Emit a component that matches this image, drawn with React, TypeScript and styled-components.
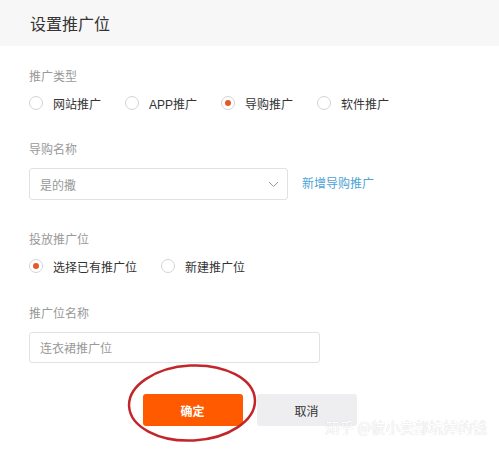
import React from "react";
import styled, { createGlobalStyle } from "styled-components";

const Global = createGlobalStyle`
  html, body { margin: 0; padding: 0; background: #fff; }
  body {
    font-family: "Liberation Sans", "Noto Sans CJK SC", sans-serif;
    width: 499px; height: 449px; overflow: hidden;
  }
`;

const Page = styled.div`
  position: relative;
  width: 499px;
  height: 449px;
  background: #fff;
`;

const Header = styled.div`
  height: 46px;
  background: #f7f7f7;
  display: flex;
  align-items: center;
  padding-left: 30px;
  font-size: 16px;
  color: #333;
  font-family: "Noto Sans CJK SC", sans-serif;
`;

const Body = styled.div`
  display: flex;
  flex-direction: column;
  padding: 0 0 0 29px;
`;

const Label = styled.div<{ $top: number }>`
  margin-top: ${(p) => p.$top}px;
  height: 16px;
  line-height: 16px;
  font-size: 12px;
  color: #999;
  font-family: "Noto Sans CJK SC", sans-serif;
`;

const RadioRow = styled.div`
  margin-top: 9px;
  height: 20px;
  display: flex;
  align-items: center;
`;

const RadioItem = styled.label`
  display: flex;
  align-items: center;
  margin-right: 24px;
  font-size: 12px;
  color: #333;
  font-family: "Liberation Sans", "Noto Sans CJK SC", sans-serif;
`;

const Circle = styled.span<{ $on?: boolean }>`
  width: 12px;
  height: 12px;
  border: 1px solid #d4d4d4;
  border-radius: 50%;
  margin-right: 10px;
  display: flex;
  align-items: center;
  justify-content: center;
  background: #fff;
  &::after {
    content: "";
    display: ${(p) => (p.$on ? "block" : "none")};
    width: 6px;
    height: 6px;
    border-radius: 50%;
    background: #e4582a;
  }
`;

const FieldRow = styled.div`
  margin-top: 11px;
  display: flex;
  align-items: center;
`;

const Select = styled.div`
  box-sizing: border-box;
  width: 259px;
  height: 32px;
  border: 1px solid #e2e2e2;
  border-radius: 3px;
  display: flex;
  align-items: center;
  justify-content: space-between;
  padding: 0 8px 0 10px;
  font-size: 12px;
  color: #999;
  font-family: "Noto Sans CJK SC", sans-serif;
`;

const Link = styled.a`
  margin-left: 14px;
  font-size: 12px;
  color: #4fa3d6;
  font-family: "Noto Sans CJK SC", sans-serif;
  margin-top: -3px;
`;

const Input = styled.div`
  box-sizing: border-box;
  width: 291px;
  height: 31px;
  border: 1px solid #e2e2e2;
  border-radius: 3px;
  display: flex;
  align-items: center;
  padding-left: 10px;
  font-size: 12px;
  color: #999;
  font-family: "Noto Sans CJK SC", sans-serif;
`;

const Buttons = styled.div`
  margin-top: 31px;
  display: flex;
  justify-content: center;
  gap: 14px;
`;

const Button = styled.button<{ $primary?: boolean }>`
  width: 100px;
  height: 32px;
  border: none;
  border-radius: 3px;
  font-size: 12px;
  font-family: "Noto Sans CJK SC", sans-serif;
  font-weight: ${(p) => (p.$primary ? 700 : 400)};
  background: ${(p) => (p.$primary ? "#ff5a00" : "#eeeef0")};
  color: ${(p) => (p.$primary ? "#fff" : "#333")};
  padding: 0;
`;

const Ellipse = styled.svg`
  position: absolute;
  left: 126px;
  top: 363px;
  pointer-events: none;
`;

const Watermark = styled.div`
  position: absolute;
  left: 325px;
  top: 418px;
  font-size: 14.5px;
  line-height: 18px;
  color: #ffffff;
  font-family: "Noto Sans CJK SC", sans-serif;
  text-shadow: 0 0 1px #c4c4c4;
  white-space: nowrap;
`;

const Chevron = () => (
  <svg width="11" height="7" viewBox="0 0 11 7">
    <path d="M1 1 L5.5 5.5 L10 1" fill="none" stroke="#999" strokeWidth="1" />
  </svg>
);

export default function App() {
  return (
    <Page>
      <Global />
      <Header>设置推广位</Header>
      <Body>
        <Label $top={22}>推广类型</Label>
        <RadioRow>
          <RadioItem><Circle />网站推广</RadioItem>
          <RadioItem><Circle />APP推广</RadioItem>
          <RadioItem><Circle $on />导购推广</RadioItem>
          <RadioItem><Circle />软件推广</RadioItem>
        </RadioRow>
        <Label $top={28}>导购名称</Label>
        <FieldRow>
          <Select>
            是的撒
            <Chevron />
          </Select>
          <Link>新增导购推广</Link>
        </FieldRow>
        <Label $top={31}>投放推广位</Label>
        <RadioRow>
          <RadioItem><Circle $on />选择已有推广位</RadioItem>
          <RadioItem><Circle />新建推广位</RadioItem>
        </RadioRow>
        <Label $top={29}>推广位名称</Label>
        <FieldRow>
          <Input>连衣裙推广位</Input>
        </FieldRow>
      </Body>
      <Buttons>
        <Button $primary>确定</Button>
        <Button>取消</Button>
      </Buttons>
      <Ellipse width="132" height="80" viewBox="0 0 132 80">
        <ellipse cx="66" cy="40" rx="63" ry="37.5" fill="none" stroke="#c3262a" strokeWidth="2.5" transform="rotate(-3 66 40)" />
      </Ellipse>
      <Watermark>知乎 @彼小卖部坑掉的钱</Watermark>
    </Page>
  );
}
